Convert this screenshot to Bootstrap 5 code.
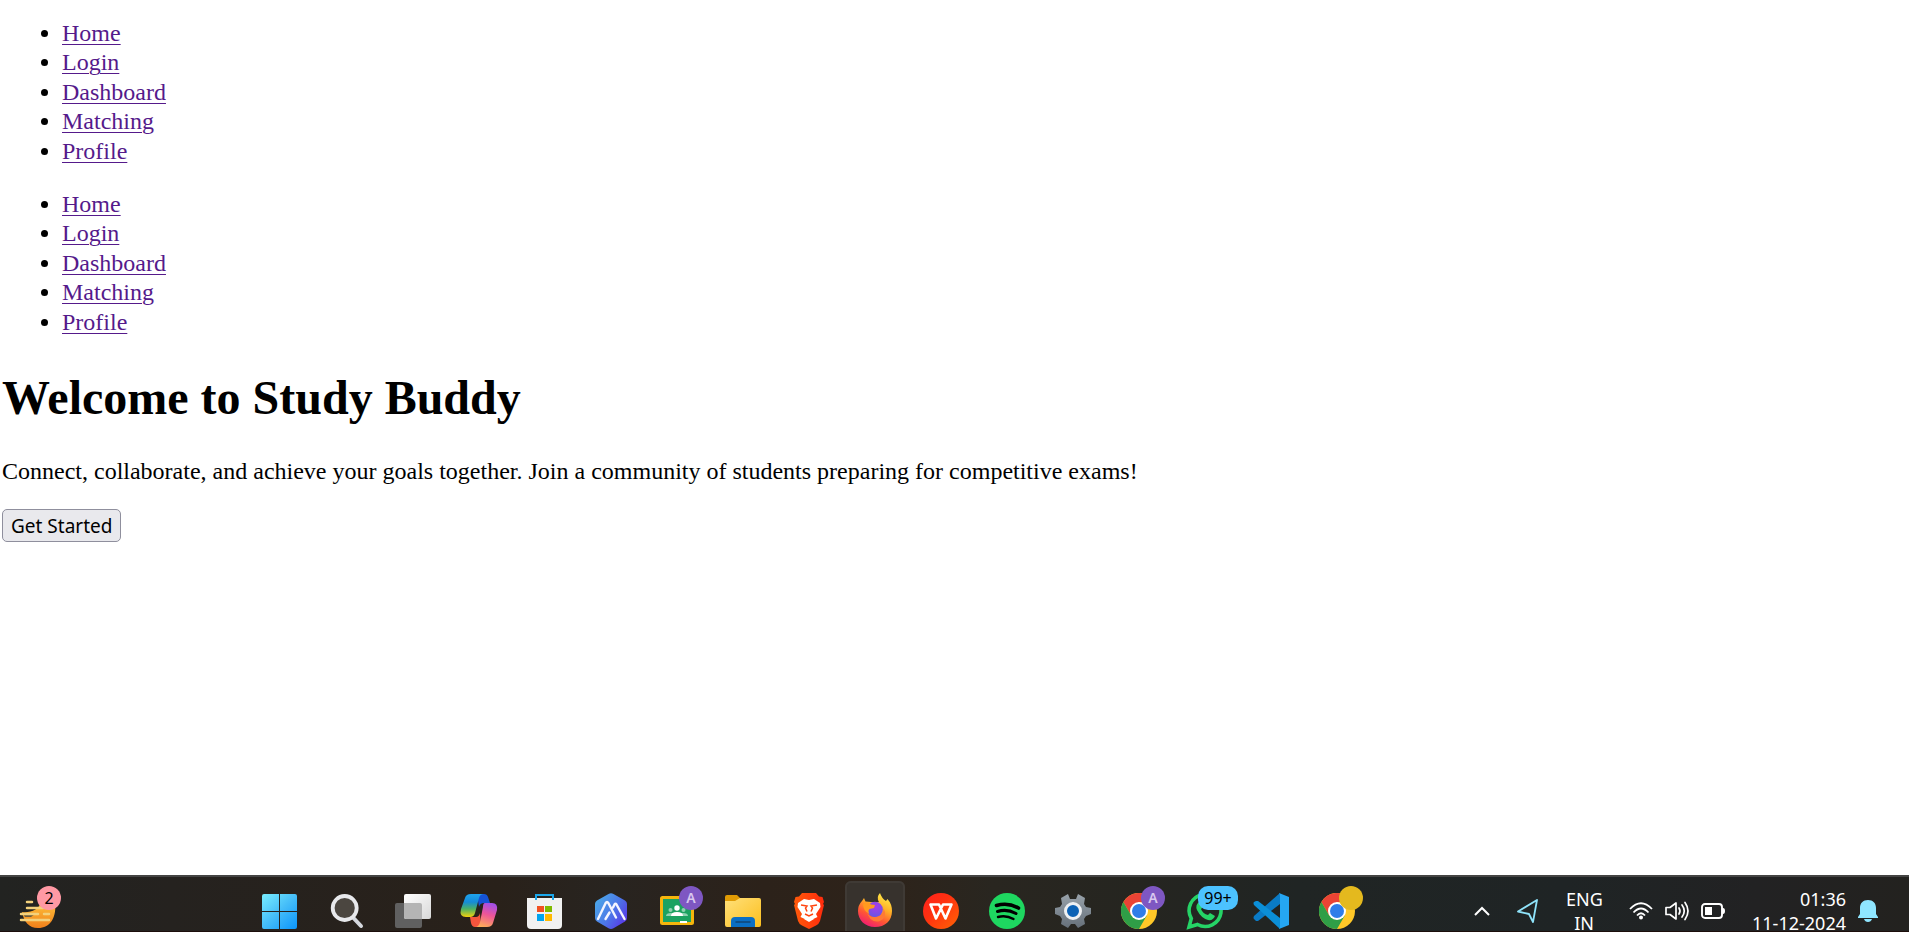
<!DOCTYPE html>
<html lang="en">
<head>
<meta charset="utf-8">
<meta name="viewport" content="width=device-width, initial-scale=1">
<title>Study Buddy</title>
<link href="https://cdn.jsdelivr.net/npm/bootstrap@5.3.0/dist/css/bootstrap.min.css" rel="stylesheet">
<style>
  body { font-family: "Liberation Serif", serif; font-size: 24px; line-height: 30px; color: #000; background: #fff; }
  .page { padding: 18px 2px 0; }
  .link-list { padding-left: 60px; margin-bottom: 23px; }
  .link-list li:nth-child(even) { line-height: 29px; }
  .link-list a { color: #551a8b; text-decoration: underline; text-decoration-thickness: 1px; text-underline-offset: 3px; }
  .page h1 { font-size: 48px; font-weight: 700; line-height: 56px; margin: 33px 0 30px; }
  .page p { margin-bottom: 23px; }
  .start-btn { font-family: "Noto Sans", "Open Sans", sans-serif; font-size: 19px; line-height: 26px; padding: 3px 8px 2px; color: #000; background: #e9e9ed; border: 1px solid #8f8f9d; border-radius: 5px; white-space: nowrap; }
  .taskbar { height: 57px; border-top: 2px solid #444443; border-bottom: 1px solid #1c0e0b; font-family: "Noto Sans", "Open Sans", sans-serif; font-size: 18px; line-height: 24px; color: #fff;
    background: linear-gradient(90deg, #222321 0, #25221f 9%, #29211a 26%, #282420 32%, #2c221a 40%, #2e231a 46%, #292620 52%, #252520 60%, #202524 68%, #1f2425 82%, #222223 92%, #23221f 100%); }
  .taskbar button { background: none; border: 0; padding: 0; color: inherit; }
  .taskbar svg { display: block; overflow: visible; flex: none; }
  .widget-btn { width: 60px; height: 60px; margin: 4px 0 0 6px; }
  .apps { gap: 6px; padding-top: 4px; margin-left: 185px; }
  .apps button, .widget-btn { display: flex; align-items: center; justify-content: center; position: relative; flex: none; border-radius: 6px; }
  .apps button { width: 60px; height: 60px; }
  .apps .is-open { background: #37322d; box-shadow: inset 0 0 0 2px #3f3a35; }
  .pill { position: absolute; height: 24px; border-radius: 12px; font-size: 16px; line-height: 24px; color: #000; text-align: center; }
  .pill-pink { width: 24px; left: 31px; top: 5px; background: #ff99a4; border-radius: 50%; }
  .pill-blue { width: 40px; left: 23px; top: 5px; background: #4cc2ff; border-radius: 10px; }
  .pill-user { width: 24px; left: 32px; top: 5px; background: #7e57c2; border-radius: 50%; color: #d9c8ef; font-size: 14px; font-weight: 600; }
  .pill-gold { width: 24px; left: 32px; top: 5px; background: #e4b91e; border-radius: 50%; }
  .tray { height: 60px; margin-top: 4px; padding-right: 31px; gap: 27px; }
  .lang { width: 36px; }
  .status { gap: 12px; }
</style>
</head>
<body class="min-vh-100 d-flex flex-column overflow-hidden">
<svg width="0" height="0" class="position-absolute" aria-hidden="true">
  <defs>
    <linearGradient id="win" gradientUnits="userSpaceOnUse" x1="0" y1="0" x2="34" y2="36"><stop stop-color="#79eeff"/><stop offset=".5" stop-color="#45bdf8"/><stop offset="1" stop-color="#0b95fb"/></linearGradient>
    <linearGradient id="sheet" x1="0" y1="0" x2="1" y2="1"><stop stop-color="#fff"/><stop offset="1" stop-color="#d8d8d8"/></linearGradient>
    <linearGradient id="copA" x1="0" y1="0" x2="0" y2="1"><stop stop-color="#1ea4ee"/><stop offset=".35" stop-color="#158bd8"/><stop offset=".65" stop-color="#4cb164"/><stop offset="1" stop-color="#f4d20b"/></linearGradient>
    <linearGradient id="copB" x1=".6" y1="0" x2=".3" y2="1"><stop stop-color="#a44fe6"/><stop offset=".45" stop-color="#ee5598"/><stop offset="1" stop-color="#ffaf57"/></linearGradient>
    <linearGradient id="hex" x1="0" y1=".2" x2="1" y2=".9"><stop stop-color="#4ba9e8"/><stop offset=".5" stop-color="#4c78e8"/><stop offset="1" stop-color="#5a2ee8"/></linearGradient>
    <linearGradient id="fold" x1="0" y1="0" x2="1" y2="1"><stop stop-color="#ffe07a"/><stop offset="1" stop-color="#fcbf1e"/></linearGradient>
    <linearGradient id="brv" x1="0" y1="0" x2="1" y2="0"><stop stop-color="#ff5a0a"/><stop offset="1" stop-color="#ff2b0d"/></linearGradient>
    <linearGradient id="fox" x1=".8" y1="0" x2=".3" y2="1"><stop stop-color="#fff04a"/><stop offset=".4" stop-color="#ffae26"/><stop offset=".7" stop-color="#ff5634"/><stop offset="1" stop-color="#f01a75"/></linearGradient>
    <radialGradient id="globe" cx=".55" cy=".3" r=".8"><stop stop-color="#a83bea"/><stop offset="1" stop-color="#5e5ae0"/></radialGradient>
    <linearGradient id="wps" x1="0" y1="0" x2="1" y2="1"><stop stop-color="#ff211e"/><stop offset=".4" stop-color="#ff3010"/><stop offset="1" stop-color="#ff6505"/></linearGradient>
    <linearGradient id="gear" x1="0" y1="0" x2="0" y2="1"><stop stop-color="#98a2aa"/><stop offset="1" stop-color="#66707a"/></linearGradient>
    <linearGradient id="food" x1="0" y1="0" x2="0" y2="1"><stop stop-color="#ffc53c"/><stop offset="1" stop-color="#f0801b"/></linearGradient>
    <symbol id="chrome" viewBox="0 0 36 36">
      <circle cx="18" cy="18" r="18" fill="#ffc828"/>
      <path d="M18 9h15.600A18 18 0 0 0 2.400 9l7.800 13.500Z" fill="#ea4335"/>
      <path d="M2.400 9A18 18 0 0 0 18 36l7.800-13.500L18 26.500 10.200 22.500Z" fill="#2f9e47"/>
      <circle cx="18" cy="18" r="9" fill="#fff"/><circle cx="18" cy="18" r="7" fill="#2f7de9"/>
    </symbol>
  </defs>
</svg>

<main class="page flex-grow-1">
  <nav aria-label="Main">
    <ul class="link-list">
      <li><a href="#home">Home</a></li>
      <li><a href="#login">Login</a></li>
      <li><a href="#dashboard">Dashboard</a></li>
      <li><a href="#matching">Matching</a></li>
      <li><a href="#profile">Profile</a></li>
    </ul>
  </nav>
  <nav aria-label="Page">
    <ul class="link-list">
      <li><a href="#home">Home</a></li>
      <li><a href="#login">Login</a></li>
      <li><a href="#dashboard">Dashboard</a></li>
      <li><a href="#matching">Matching</a></li>
      <li><a href="#profile">Profile</a></li>
    </ul>
  </nav>
  <h1>Welcome to Study Buddy</h1>
  <p>Connect, collaborate, and achieve your goals together. Join a community of students preparing for competitive exams!</p>
  <button type="button" class="start-btn d-block">Get Started</button>
</main>

<footer class="taskbar d-flex align-items-start overflow-hidden flex-shrink-0">
  <button type="button" class="widget-btn" aria-label="Widgets">
    <svg width="36" height="36" viewBox="0 0 36 36"><path d="M4 19C12 20 22 17 23 8h14C39 25 32 35 20 35 11 35 6 29 4 19Z" fill="url(#food)"/><path d="M5 21h12l-4 3H7Z" fill="#6d5c3b"/><g stroke="#f3d17c" stroke-width="2.500" stroke-linecap="round"><path d="M9 9h5M9 15h16M3 21h17M26 21h5M3 27h28"/></g></svg>
    <span class="pill pill-pink">2</span>
  </button>

  <div class="apps d-flex">
    <button type="button" aria-label="Start"><svg width="36" height="36" viewBox="0 0 36 36"><g fill="url(#win)"><path d="M1 1h15v17H-1V3q0-2 2-2ZM17 1h15q2 0 2 2v15H17ZM-1 19h17v17H1q-2 0-2-2ZM17 19h17v15q0 2-2 2H17Z"/></g></svg></button>
    <button type="button" aria-label="Search"><svg width="36" height="36" viewBox="0 0 36 36"><path d="m24.500 25 7.500 8" stroke="#d5d8de" stroke-width="4" stroke-linecap="round"/><circle cx="15.700" cy="15" r="12" fill="#4b4640" stroke="#e8e9ec" stroke-width="3.800"/></svg></button>
    <button type="button" aria-label="Task view"><svg width="36" height="36" viewBox="0 0 36 36"><rect y="10" width="27" height="25" rx="2" fill="#606060"/><rect x="9" y="1" width="27" height="25" rx="2" fill="url(#sheet)"/><path d="M9 10h16q2 0 2 2v14H11q-2 0-2-2Z" fill="#b4b4b4"/></svg></button>
    <button type="button" aria-label="Copilot"><svg width="36" height="36" viewBox="0 0 36 36"><path d="M16 1h7q3 0 4 3l2 6h-6q-4 0-5 4Z" fill="#1553d6"/><path d="M20 34h-6q-3 0-4-4l-1-6h6q3 0 4-4Z" fill="#f5553d"/><path d="M10 1h13q-4 0-5 4l-4 15q-1 4-5 4H5q-7 0-5-8L4 5q1-4 6-4Z" fill="url(#copA)"/><path d="M24 10h7q6 0 5 7l-4 13q-1 4-6 4H14q4 0 5-5l3-15q0-4 2-4Z" fill="url(#copB)"/></svg></button>
    <button type="button" aria-label="Store"><svg width="36" height="36" viewBox="0 0 36 36"><path d="M0 5h35v27q0 4-4 4H4q-4 0-4-4Z" fill="#f1f1f1"/><path d="M9 7V2h17v5" fill="none" stroke="#1ba7eb" stroke-width="2"/><path d="M10 13h7v6h-7Z" fill="#f25022"/><path d="M18 13h7v6h-7Z" fill="#7fba00"/><path d="M10 21h7v7h-7Z" fill="#00a4ef"/><path d="M18 21h7v7h-7Z" fill="#ffb900"/></svg></button>
    <button type="button" aria-label="Assistant"><svg width="36" height="36" viewBox="0 0 36 36"><path d="m15.500 1q2.500-1.500 5 0L32 7.500q2 1.300 2 3.500v14q0 2.300-2 3.500L20.500 35.200q-2.500 1.500-5 0L4 28.500Q2 27.300 2 25V11q0-2.300 2-3.500Z" fill="url(#hex)"/><path d="M5 26 12.700 10q1.300-2 2.600 0L23 24.500M12.500 26l4-6.500M20 14.500l1.500-3q1-1.500 2 0L31.500 26" fill="none" stroke="#f4f5ff" stroke-width="2.400" stroke-linecap="round" stroke-linejoin="round"/></svg></button>
    <button type="button" aria-label="Classroom"><svg width="36" height="36" viewBox="0 0 36 36"><rect x="1" y="3" width="34" height="29" rx="2.500" fill="#f5b50c"/><path d="M4 6h28v23H4Z" fill="#1ba261"/><g fill="#8ed1b0"><circle cx="11.500" cy="17" r="2"/><circle cx="24.500" cy="17" r="2"/><path d="M7 23q0-3 5-3h12q5 0 5 3Z"/></g><circle cx="18" cy="15" r="2.700" fill="#fff"/><path d="M12 23q0-4 6-4t6 4ZM21 28h7v2h-7Z" fill="#fff"/></svg><span class="pill pill-user">A</span></button>
    <button type="button" aria-label="File Explorer"><svg width="36" height="36" viewBox="0 0 36 36"><path d="M0 4q0-2 2-2h10l4 4-4 5H0Z" fill="#e09b04"/><path d="M0 8h10l5-3h19q2 0 2 2v25q0 2-2 2H2q-2 0-2-2Z" fill="url(#fold)"/><path d="M6 34v-6q0-4 4-4h16q4 0 4 4v6Z" fill="#0b6fc4"/><path d="M11 29h14" stroke="#124674" stroke-width="1.500" stroke-linecap="round"/></svg></button>
    <button type="button" aria-label="Brave"><svg width="36" height="36" viewBox="0 0 36 36"><path d="M11 0h14l3 3.500 3.500.5 1.500 5-1 2 1 1-4 16q-1 3-4 4.500L18 36l-7-3.500Q8 31 7 28L3 12l1-1-1-2 1.500-5L8 3.500Z" fill="url(#brv)"/><path d="m13 6 5 1 5-1 6 4 .5 4-4.500 7 1.500 3-8.500 4-8.500-4 1.500-3-4.500-7 .5-4Z" fill="#fff"/><path d="m10 12 6 1-1.500 2 1.500 3.500M26 12l-6 1 1.500 2-1.500 3.500M14 21l4 2 4-2" fill="none" stroke="#ff4612" stroke-width="1.500"/><path d="m13 26 5-2 5 2-5 3Z" fill="#fff"/></svg></button>
    <button type="button" class="is-open" aria-label="Firefox"><svg width="36" height="36" viewBox="0 0 36 36"><path d="M18 34C8 34 1 27 1 18q0-6 4-10l2-3 1.500 3.500L14 9l8 0q-3-5 1-9 1.500 5 6 8l1.500-2Q35 11 35 18c0 10-7 16-17 16Z" fill="url(#fox)"/><circle cx="18" cy="16.500" r="7.800" fill="url(#globe)"/><path d="M6 11q5-3 8 .5l4 .5-1 3-4.500 1q-2 2 0 5Q6 18 6 11Z" fill="#ff9a1f"/><path d="M9 17q2 8 10 7 8-1 7.500-9Q31 24 23 28 13 31 9 17Z" fill="#ff7a35"/></svg></button>
    <button type="button" aria-label="WPS Office"><svg width="36" height="36" viewBox="0 0 36 36"><circle cx="18" cy="18" r="18" fill="url(#wps)"/><path d="M7.500 11.500H16l6.500 14 6-14H20l-7 14Z" fill="none" stroke="#fff" stroke-width="2.600" stroke-linejoin="round"/></svg></button>
    <button type="button" aria-label="Spotify"><svg width="36" height="36" viewBox="0 0 36 36"><circle cx="18" cy="18" r="18" fill="#1ed760"/><g fill="none" stroke="#000" stroke-linecap="round"><path d="M7.500 12.500Q19 9 29.500 15" stroke-width="3.600"/><path d="M8.500 18.500Q18 15.500 27 20.500" stroke-width="3"/><path d="M9 24Q17 21.800 24.500 26" stroke-width="2.400"/></g></svg></button>
    <button type="button" aria-label="Settings"><svg width="36" height="36" viewBox="0 0 36 36"><path d="m13 1 2 5h6l2-5 7 4-1 6 2 3 5 1v6l-5 2-2 3 1 5-7 4-3-4h-4l-3 4-7-4 1-5-2-3-5-2v-6l5-1 2-3-1-6Z" fill="url(#gear)"/><circle cx="18" cy="18" r="7.500" fill="#0c62b5" stroke="#eef0f2" stroke-width="3"/></svg></button>
    <button type="button" aria-label="Chrome, profile A"><svg width="36" height="36"><use href="#chrome"/></svg><span class="pill pill-user">A</span></button>
    <button type="button" aria-label="WhatsApp"><svg width="36" height="36" viewBox="0 0 36 36"><path d="m2 34 2.300-8.500A16 16 0 1 1 10.500 31.500Z" fill="none" stroke="#25d366" stroke-width="3.600"/><path d="M12 9q-4 3-2 8 4 8 11 10 5 1 7-4l-5-3-2 2q-5-1-7-6l2-2-2-5Z" fill="#25d366"/></svg><span class="pill pill-blue">99+</span></button>
    <button type="button" aria-label="Visual Studio Code"><svg width="36" height="36" viewBox="0 0 36 36"><path d="M27 0 1 23q-1 2 0 3l2 2 2 0L27 11Z" fill="#0a7bc6"/><path d="m27 36-26-24q-1-2 0-3l2-1h2l22 17Z" fill="#0b8fd8"/><path d="m26 0 10 4v28l-10 4q1-1 1-3V3q0-2-1-3Z" fill="#25a6f2"/></svg></button>
    <button type="button" aria-label="Chrome"><svg width="36" height="36"><use href="#chrome"/></svg><span class="pill pill-gold"></span></button>
  </div>

  <div class="tray ms-auto d-flex align-items-center">
    <button type="button" aria-label="Show hidden icons"><svg width="16" height="10" viewBox="0 0 16 10" fill="none" stroke="#fff" stroke-width="2"><path d="m1 9 7-7 7 7"/></svg></button>
    <button type="button" aria-label="Location"><svg width="22" height="24" viewBox="0 0 22 24" fill="none" stroke="#8fe3fa" stroke-width="1.800" stroke-linejoin="round"><path d="M20 1 1 12.500l11 2.500 4 8Z"/></svg></button>
    <button type="button" class="lang text-center">ENG IN</button>
    <button type="button" class="status d-flex align-items-center" aria-label="Network, volume and battery">
      <svg width="24" height="18" viewBox="0 0 24 18" fill="none" stroke="#fff" stroke-width="1.800"><path d="M1 7q11-11.500 22 0M4.500 10.500q7.500-8 15 0M8 13.500q4-4.500 8 0"/><circle cx="12" cy="15.500" r="2" fill="#fff" stroke="none"/></svg>
      <svg width="24" height="20" viewBox="0 0 24 20" fill="none" stroke="#fff" stroke-width="1.700" stroke-linejoin="round" stroke-linecap="round"><path d="M1 6.500h4L11 2v16l-6-4.500H1ZM14 7q2 3 0 6M17 4q4.500 6 0 12M20 1.500q6 8.500 0 17"/></svg>
      <svg width="24" height="16" viewBox="0 0 24 16"><rect x="1" y="1" width="20" height="14" rx="3" fill="none" stroke="#fff" stroke-width="1.900"/><path d="M4 4h7v8H4ZM21 5h1q2 0 2 3t-2 3h-1Z" fill="#fff"/></svg>
    </button>
    <div class="d-flex align-items-center gap-2">
      <button type="button" class="text-end">01:36<br>11-12-2024</button>
      <button type="button" class="ms-1" aria-label="Notifications"><svg width="20" height="24" viewBox="0 0 20 24" fill="#8fe6ff"><path d="M10 1c5 0 8 3 8 8v6l2 3v1H0v-1l2-3V9c0-5 3-8 8-8ZM6 20h8q-1 3-4 3t-4-3Z"/></svg></button>
    </div>
  </div>
</footer>
<script src="https://cdn.jsdelivr.net/npm/bootstrap@5.3.0/dist/js/bootstrap.bundle.min.js"></script>
</body>
</html>
